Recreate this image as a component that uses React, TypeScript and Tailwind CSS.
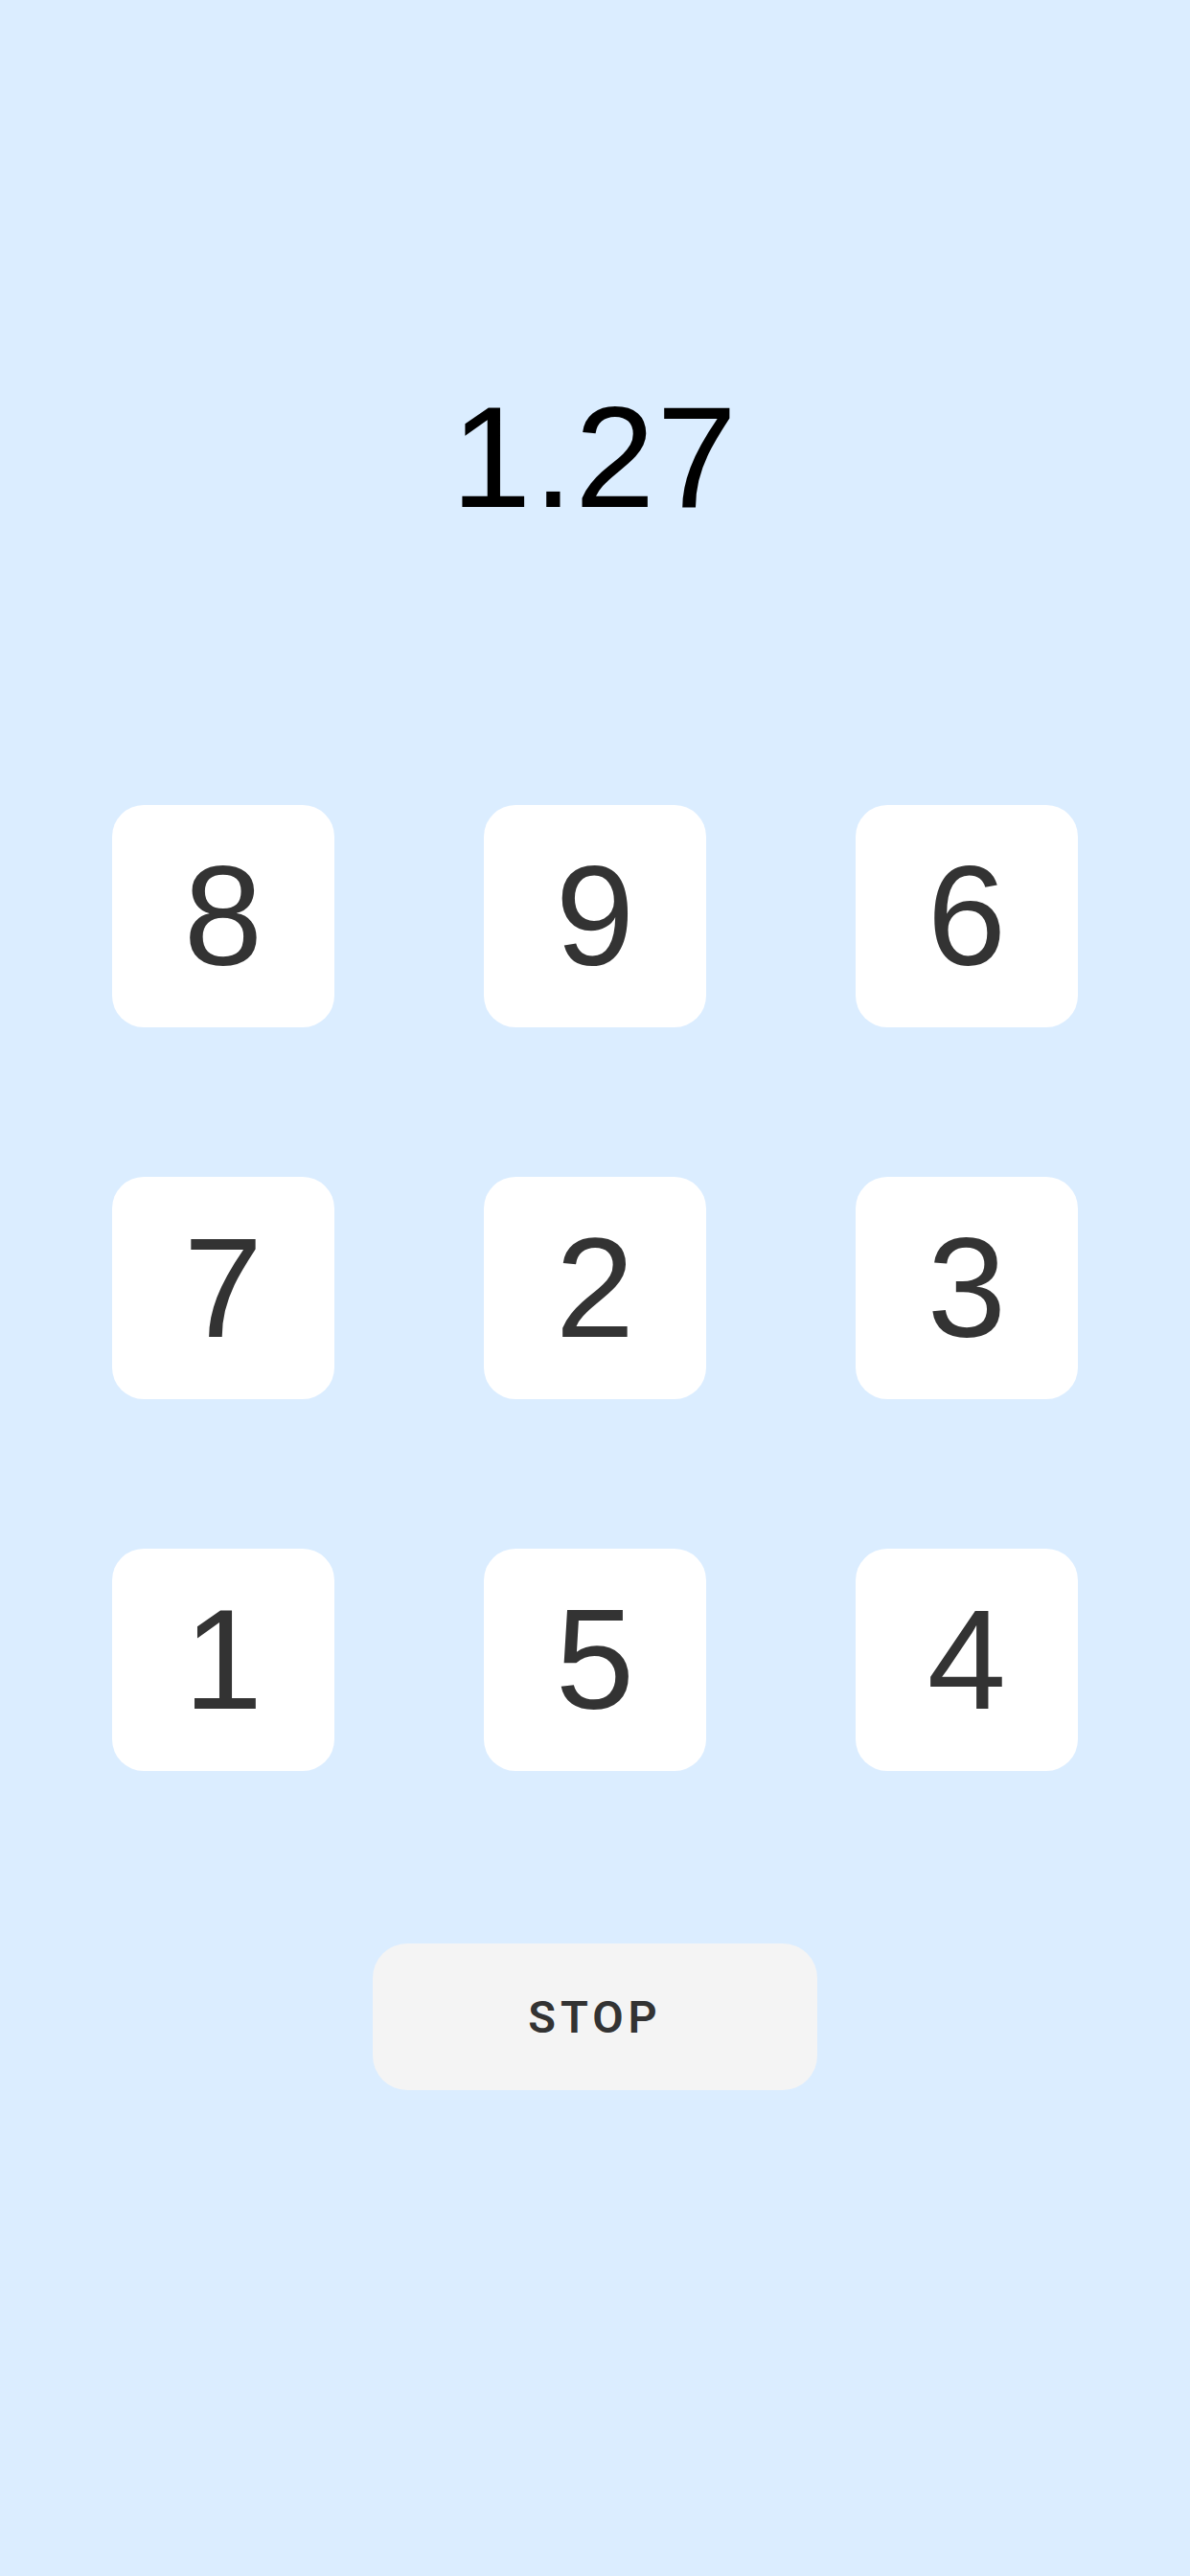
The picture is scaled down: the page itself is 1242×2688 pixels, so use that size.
import React, { useState } from 'react';

const digits = [8, 9, 6, 7, 2, 3, 1, 5, 4];

export default function App() {
  const [elapsed] = useState(1.27);

  return (
    <div className="min-h-[2688px] w-full bg-[#dbedff] flex flex-col items-center pt-[402px]">
      {/* Timer */}
      <div className="text-[150px] leading-none tracking-[2px] text-black font-['Liberation_Sans',Arial,sans-serif]">
        {elapsed.toFixed(2)}
      </div>

      {/* Number tiles */}
      <div className="mt-[288px] grid grid-cols-[232px_232px_232px] gap-x-[156px] gap-y-[156px]">
        {digits.map(d => (
          <button
            key={d}
            className="h-[232px] w-[232px] rounded-[33px] bg-white flex items-center justify-center text-[148px] leading-none text-[#333333] font-['Liberation_Sans',Arial,sans-serif]"
          >
            {d}
          </button>
        ))}
      </div>

      {/* Stop button */}
      <button className="mt-[180px] h-[153px] w-[464px] rounded-[36px] bg-[#f4f4f4] flex items-center justify-center text-[47px] leading-none font-semibold tracking-[5px] text-[#333333] font-['Roboto','Noto_Sans',sans-serif]">
        STOP
      </button>
    </div>
  );
}
